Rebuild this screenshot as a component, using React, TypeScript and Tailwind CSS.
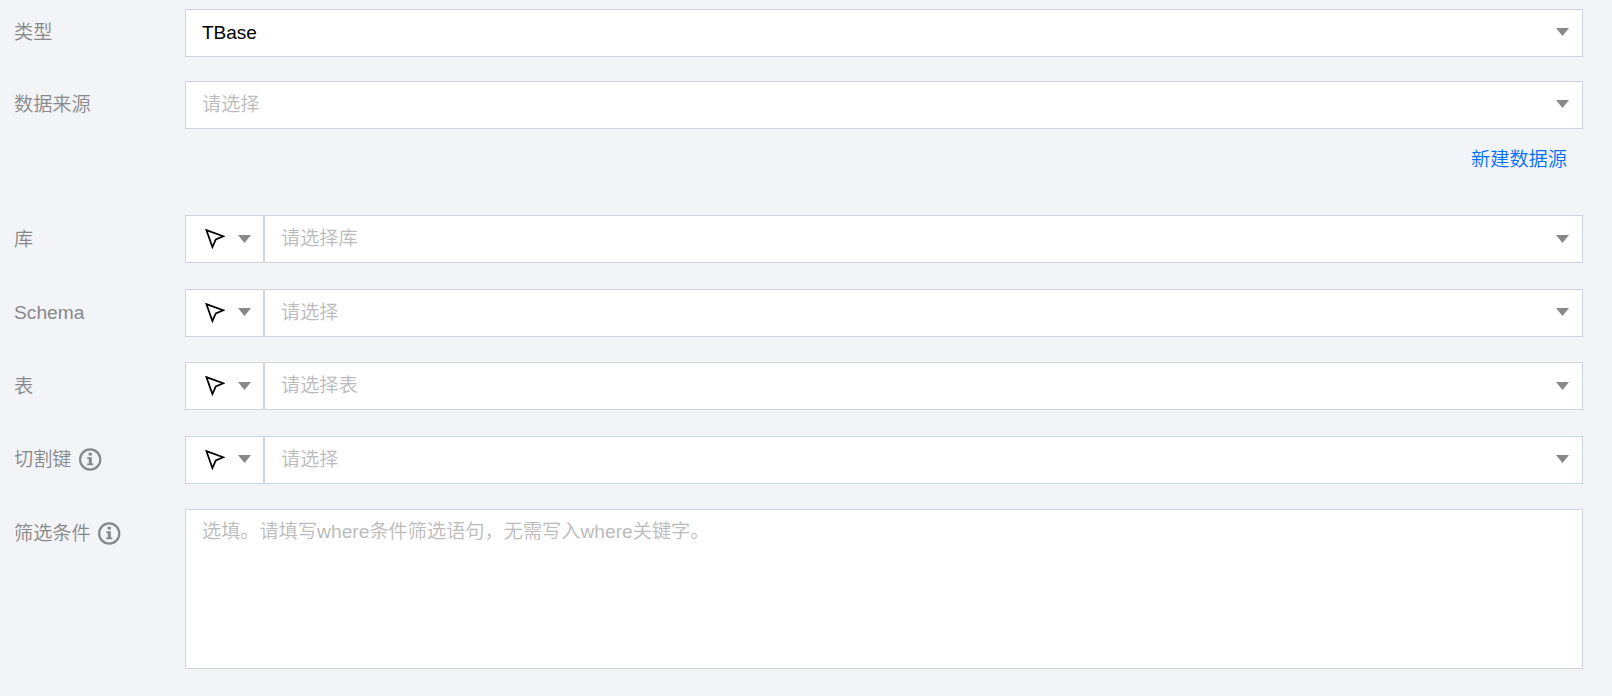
import { FC, ReactNode } from 'react'

interface Field {
  label: string
  placeholder: string
  info?: boolean
  low?: boolean
  className: string
}

const fields: Field[] = [
  { label: '库', placeholder: '请选择库', low: true, className: 'mt-[86px]' },
  { label: 'Schema', placeholder: '请选择', className: 'mt-[26px]' },
  { label: '表', placeholder: '请选择表', low: true, className: 'mt-[25px]' },
  { label: '切割键', placeholder: '请选择', info: true, className: 'mt-[26px]' },
]

const Caret: FC = () => (
  <svg className="block shrink-0" width="13" height="8" viewBox="0 0 13 8">
    <path d="M0 0H13L6.5 8Z" fill="#888" />
  </svg>
)

const Pointer: FC<{ low?: boolean }> = ({ low }) => (
  <svg
    className={`block shrink-0 ${low ? '' : 'mt-[2px]'}`}
    width="20"
    height="20"
    viewBox="0 0 20 20"
    fill="none"
  >
    <path
      d="M1.4 1.1L18.3 7.3L10.8 10.5L7.4 18.1Z"
      stroke="#000"
      strokeWidth="1.7"
      strokeLinejoin="miter"
    />
  </svg>
)

const Info: FC = () => (
  <svg className="ml-[7px] block shrink-0" width="23" height="23" viewBox="0 0 23 23" fill="none">
    <circle cx="11.2" cy="11.5" r="10.1" stroke="#888" strokeWidth="2.2" />
    <path d="M9.6 4.7h3.3v2.7H9.6zM8.2 9.2h4.6v6.2h1.5v1.8H8.2v-1.8h1.6v-4.4H8.2z" fill="#888" />
  </svg>
)

const Label: FC<{ children: ReactNode; info?: boolean; low?: boolean }> = ({
  children,
  info,
  low,
}) => (
  <div
    className={`flex h-12 w-[171px] shrink-0 items-center text-[#888] ${low ? 'pt-px' : 'pb-px'}`}
  >
    <span>{children}</span>
    {info && <Info />}
  </div>
)

const Select: FC<{ value?: string; placeholder?: string; low?: boolean }> = ({
  value,
  placeholder,
  low,
}) => (
  <div
    className={`flex h-12 min-w-0 flex-1 items-center justify-between border border-[#cfd5de] bg-white pr-[13px] pl-4 ${low ? 'pb-0' : 'pb-[2px]'}`}
  >
    <span
      className={`${value ? 'text-[19px] text-black' : 'text-[#bbb]'} ${low ? '' : 'pt-[2px]'}`}
    >
      {value || placeholder}
    </span>
    <Caret />
  </div>
)

const App = () => (
  <div className="h-[696px] w-full bg-[#f2f4f8] pt-[9px] pr-[29px] pl-[14px] font-['Liberation_Sans','Noto_Sans_CJK_SC',sans-serif] text-[19.2px] leading-7 font-[350]">
    <div className="flex">
      <Label>类型</Label>
      <Select value="TBase" />
    </div>

    <div className="mt-6 flex">
      <Label>数据来源</Label>
      <Select placeholder="请选择" />
    </div>

    <div className="-mb-[45px] flex h-[45px] justify-end pt-[17px] pr-4 text-[#006eff]">
      <a href="#">新建数据源</a>
    </div>

    {fields.map((field, i) => (
      <div className={`flex ${field.className}`} key={i}>
        <Label info={field.info} low={field.low}>
          {field.label}
        </Label>
        <div
          className={`flex h-12 w-[79px] shrink-0 items-center justify-between border border-[#cfd5de] bg-white pr-[12.5px] pl-[19px] ${field.low ? 'pb-0' : 'pb-[2px]'}`}
        >
          <Pointer low={field.low} />
          <Caret />
        </div>
        <Select placeholder={field.placeholder} low={field.low} />
      </div>
    ))}

    <div className="mt-[25px] flex">
      <Label info low>
        筛选条件
      </Label>
      <textarea
        className="block h-40 min-w-0 flex-1 resize-none border border-[#cfd5de] bg-white px-4 py-2 leading-7 outline-none placeholder:text-[#bbb]"
        placeholder="选填。请填写where条件筛选语句，无需写入where关键字。"
      />
    </div>
  </div>
)

export default App
